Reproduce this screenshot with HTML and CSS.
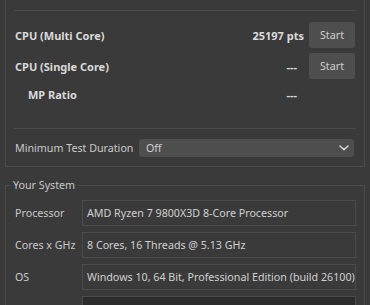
FILE: index.html
```html
<!DOCTYPE html>
<html>
<head>
<meta charset="utf-8">
<link rel="stylesheet" href="styles.css">
</head>
<body>
<div class="panel">
  <div class="sep"></div>
  <div class="row r1">
    <span class="label bold">CPU (Multi Core)</span>
    <span class="value bold">25197 pts</span>
    <button class="btn">Start</button>
  </div>
  <div class="row r2">
    <span class="label bold">CPU (Single Core)</span>
    <span class="value bold dash">---</span>
    <button class="btn">Start</button>
  </div>
  <div class="row mp">
    <span class="label bold indent">MP Ratio</span>
    <span class="value bold dash">---</span>
    <span class="btn-space"></span>
  </div>
  <div class="sep sep2"></div>
  <div class="row dur">
    <span class="label">Minimum Test Duration</span>
    <div class="select"><span>Off</span>
      <svg class="chev" width="10" height="6" viewBox="0 0 10 6"><path d="M1 1 L5 4.6 L9 1" fill="none" stroke="#d4d4d4" stroke-width="1.6" stroke-linecap="round" stroke-linejoin="round"/></svg>
    </div>
  </div>
</div>
<div class="group">
  <div class="legend">Your System</div>
  <div class="frow"><span class="flabel">Processor</span><div class="field">AMD Ryzen 7 9800X3D 8-Core Processor</div></div>
  <div class="frow"><span class="flabel">Cores x GHz</span><div class="field">8 Cores, 16 Threads @ 5.13 GHz</div></div>
  <div class="frow"><span class="flabel">OS</span><div class="field">Windows 10, 64 Bit, Professional Edition (build 26100)</div></div>
  <div class="frow"><span class="flabel"></span><div class="field dark"></div></div>
</div>
</body>
</html>
```
FILE: styles.css
```css
html, body {
  margin: 0;
  padding: 0;
  background: #3a3a3a;
  width: 370px;
  height: 305px;
  overflow: hidden;
  font-family: "Noto Sans", "Open Sans", sans-serif;
  font-size: 10.7px;
  color: #c9c9c9;
}
.panel {
  margin-left: 5px;
  width: 360px;
  height: 167px;
  box-sizing: border-box;
  border: 1px solid #4b4b4b;
  border-top: none;
  padding: 10px 8px 0 8px;
}
.sep {
  height: 1px;
  background: #4b4b4b;
}
.row {
  display: flex;
  align-items: center;
  height: 26px;
}
.r1 { margin-top: 11px; }
.r2 { margin-top: 5px; }
.mp { margin-top: 5px; height: 21px; }
.sep2 { margin-top: 23px; }
.dur { margin-top: 10px; height: 18px; }
.label {
  padding-left: 1px;
  flex: 1;
}
.bold {
  font-weight: bold;
  font-size: 11px;
  color: #dadada;
}
.indent { padding-left: 14px; }
.value { margin-right: 5px; }
.dash { margin-right: 12px; }
.btn {
  width: 46px;
  height: 26px;
  border: none;
  border-radius: 3px;
  background: #4e4e4e;
  color: #cfcfcf;
  font-family: inherit;
  font-size: 10.7px;
  padding: 0;
  margin-right: 1px;
}
.btn-space { width: 47px; }
.select {
  width: 215px;
  height: 18px;
  margin-right: 2px;
  background: #4e4e4e;
  border-radius: 3px;
  display: flex;
  align-items: center;
  justify-content: space-between;
  padding: 0 5px 0 7px;
  box-sizing: border-box;
  color: #d0d0d0;
}
.chev { display: block; }
.group {
  margin-top: 18px;
  margin-left: 5px;
  width: 360px;
  height: 140px;
  box-sizing: border-box;
  border: 1px solid #4b4b4b;
  border-bottom: none;
  position: relative;
  padding: 14px 8px 0 8px;
}
.legend {
  position: absolute;
  top: -8px;
  left: 4px;
  padding: 0 3px;
  background: #3a3a3a;
  line-height: 15px;
  color: #c9c9c9;
}
.frow {
  display: flex;
  align-items: center;
  height: 26px;
  margin-bottom: 6px;
}
.flabel {
  width: 67px;
  padding-left: 1px;
}
.field {
  width: 274px;
  height: 26px;
  box-sizing: border-box;
  border: 1px solid #4b4b4b;
  padding: 0 4px;
  line-height: 24px;
  white-space: nowrap;
  overflow: hidden;
  color: #d0d0d0;
}
.field.dark { background: #2c2c2c; }
```
